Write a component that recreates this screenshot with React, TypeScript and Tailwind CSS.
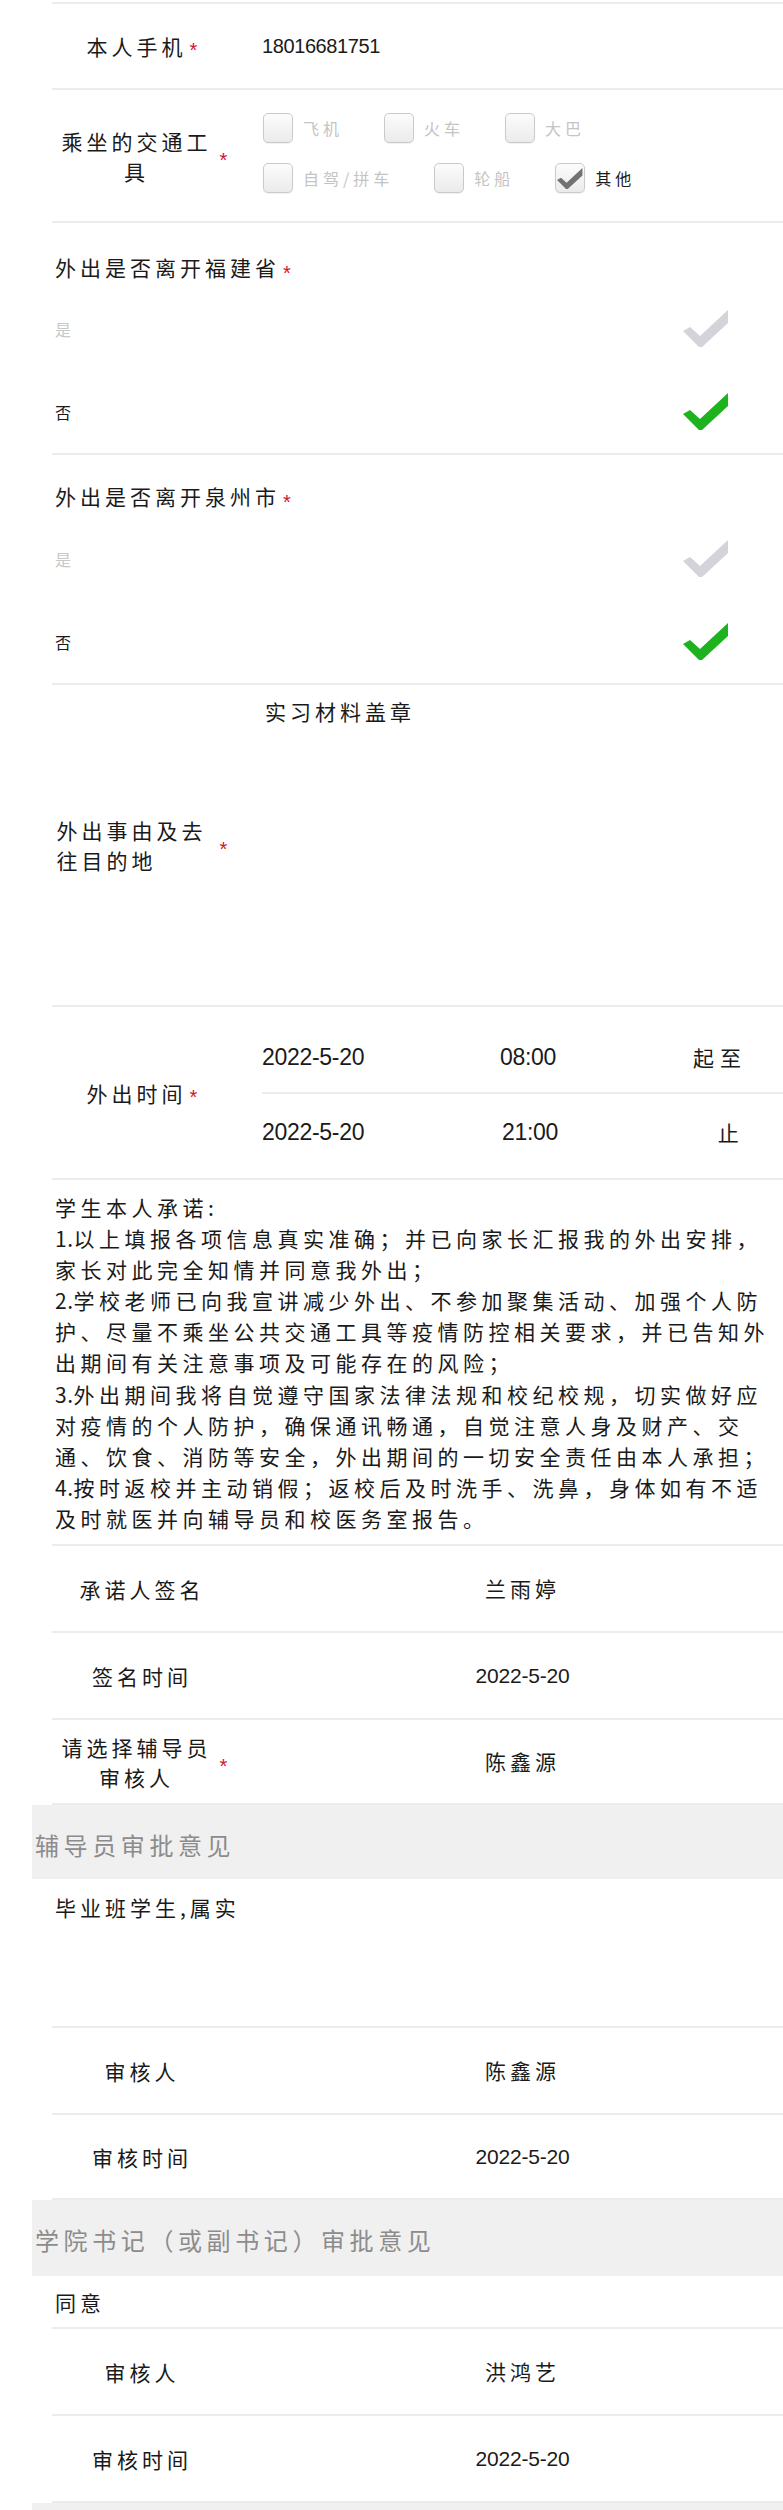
const rowLine = "border-b-2 border-[#ececec]";
const digits = "font-['Liberation_Sans','Noto_Sans_CJK_SC',sans-serif]";

function Star() {
  return (
    <span className="relative top-[4px] ml-[3px] font-['Liberation_Sans',sans-serif] text-[20px] leading-[20px] text-[#d0142c]">
      *
    </span>
  );
}

function Tick({ color, className = "" }: { color: string; className?: string }) {
  return (
    <svg className={className} width="46" height="37" viewBox="0 0 46 37">
      <polygon points="0,21 7,17 17,26 45,0 45,13 19,37 16,37" fill={color} />
    </svg>
  );
}

function Label({ text, required, left }: { text: string; required?: boolean; left?: boolean }) {
  return (
    <div className="flex w-[180px] shrink-0 items-center justify-center">
      <span className={`max-w-[160px] text-[21px] leading-[30px] tracking-[4px] ${left ? "text-left" : "text-center"}`}>
        {text}
      </span>
      {required && <Star />}
    </div>
  );
}

function Box({ label, checked }: { label: string; checked?: boolean }) {
  return (
    <div className="flex items-center gap-[10px]">
      <div className="flex h-[30px] w-[30px] items-center justify-center rounded-[5px] border border-[#cacaca] bg-linear-to-b from-[#fcfcfc] to-[#ebebeb] shadow-[0_1px_1px_rgba(0,0,0,0.06)]">
        {checked && <Tick color="#727272" className="h-[21px] w-[26px]" />}
      </div>
      <span className={`text-[16px] leading-[22px] tracking-[4px] ${checked ? "text-[#1a1a1a]" : "text-[#c4c4c4]"}`}>
        {label}
      </span>
    </div>
  );
}

function YesNo({ title, titleH, titlePt }: { title: string; titleH: string; titlePt: string }) {
  return (
    <div className={rowLine}>
      <div className={`${titleH} ${titlePt} pl-[3px] text-[21px] leading-[22px] tracking-[4px]`}>
        {title}
        <Star />
      </div>
      <div className="flex h-[83px] items-center justify-between pl-[3px]">
        <span className="text-[16px] text-[#c8c8c8]">是</span>
        <Tick color="#d3d3d9" className="mr-[54px]" />
      </div>
      <div className="flex h-[83px] items-center justify-between pl-[3px]">
        <span className="text-[16px] text-[#1a1a1a]">否</span>
        <Tick color="#1fb21f" className="mr-[54px]" />
      </div>
    </div>
  );
}

function InfoRow({ label, value, h, date, required }: { label: string; value: string; h: string; date?: boolean; required?: boolean }) {
  return (
    <div className={`flex ${h} items-center ${rowLine}`}>
      <Label text={label} required={required} />
      <div
        className={`ml-[30px] flex-1 text-center ${
          date ? `${digits} text-[21px] tracking-[-0.2px]` : "text-[21px] tracking-[4px]"
        }`}
      >
        {value}
      </div>
    </div>
  );
}

function Band({ title }: { title: string }) {
  return (
    <div className="h-[74px] bg-[#f0f0f0] pl-[3px] pt-[28px] text-[24px] leading-[24px] tracking-[4.6px] text-[#8c8c8c]">
      {title}
    </div>
  );
}

const promise = [
  ["", "学生本人承诺:"],
  ["1.", "以上填报各项信息真实准确；并已向家长汇报我的外出安排，"],
  ["", "家长对此完全知情并同意我外出；"],
  ["2.", "学校老师已向我宣讲减少外出、不参加聚集活动、加强个人防"],
  ["", "护、尽量不乘坐公共交通工具等疫情防控相关要求，并已告知外"],
  ["", "出期间有关注意事项及可能存在的风险；"],
  ["3.", "外出期间我将自觉遵守国家法律法规和校纪校规，切实做好应"],
  ["", "对疫情的个人防护，确保通讯畅通，自觉注意人身及财产、交"],
  ["", "通、饮食、消防等安全，外出期间的一切安全责任由本人承担；"],
  ["4.", "按时返校并主动销假；返校后及时洗手、洗鼻，身体如有不适"],
  ["", "及时就医并向辅导员和校医务室报告。"],
];

export default function App() {
  return (
    <div className="min-h-[2510px] overflow-x-hidden bg-white pl-[32px] pt-[2px] font-['Noto_Sans_CJK_SC',sans-serif] text-[#1a1a1a]">
      <div className="ml-[20px] border-t-2 border-[#ececec]">
        {/* phone */}
        <div className={`flex h-[86px] items-center ${rowLine}`}>
          <Label text="本人手机" required />
          <div className={`ml-[30px] ${digits} text-[20px] tracking-[-0.4px]`}>18016681751</div>
        </div>

        {/* transport */}
        <div className={`flex h-[133px] items-center ${rowLine}`}>
          <Label text="乘坐的交通工具" required />
          <div className="ml-[31px] flex h-full w-[420px] flex-wrap content-start gap-x-[41px] gap-y-[20px] pt-[23px]">
            <Box label="飞机" />
            <Box label="火车" />
            <Box label="大巴" />
            <Box label="自驾/拼车" />
            <Box label="轮船" />
            <Box label="其他" checked />
          </div>
        </div>

        <YesNo title="外出是否离开福建省" titleH="h-[64px]" titlePt="pt-[33px]" />
        <YesNo title="外出是否离开泉州市" titleH="h-[62px]" titlePt="pt-[30px]" />

        {/* reason */}
        <div className={`flex h-[322px] ${rowLine}`}>
          <div className="flex items-center">
            <Label text="外出事由及去往目的地" required left />
          </div>
          <div className="ml-[33px] pt-[15px] text-[21px] leading-[22px] tracking-[4px]">实习材料盖章</div>
        </div>

        {/* time */}
        <div className={`flex h-[173px] items-center ${rowLine}`}>
          <Label text="外出时间" required />
          <div className="ml-[30px] flex-1 self-stretch">
            <div className={`flex h-[87px] items-start pt-[38px] ${rowLine} ${digits} text-[23px] leading-[24px] tracking-[-0.3px]`}>
              <span className="w-[238px]">2022-5-20</span>
              <span className="w-[170px]">08:00</span>
              <span className="w-[100px] text-center font-['Noto_Sans_CJK_SC',sans-serif] text-[21px] tracking-[6px]">起至</span>
            </div>
            <div className={`flex h-[84px] items-start pt-[26px] ${digits} text-[23px] leading-[24px] tracking-[-0.3px]`}>
              <span className="w-[240px]">2022-5-20</span>
              <span className="w-[176px]">21:00</span>
              <span className="w-[100px] text-center font-['Noto_Sans_CJK_SC',sans-serif] text-[21px]">止</span>
            </div>
          </div>
        </div>

        {/* promise */}
        <div className={`h-[366px] pl-[3px] pt-[12px] ${rowLine}`}>
          {promise.map(([num, text], i) => (
            <div key={i} className="whitespace-nowrap text-[21px] leading-[31.1px] tracking-[4.5px]">
              {num && <span className="tracking-[0.5px]">{num}</span>}
              {text}
            </div>
          ))}
        </div>

        <InfoRow label="承诺人签名" value="兰雨婷" h="h-[87px]" />
        <InfoRow label="签名时间" value="2022-5-20" h="h-[87px]" date />
        <InfoRow label="请选择辅导员审核人" value="陈鑫源" h="h-[85px]" required />
      </div>

      <Band title="辅导员审批意见" />

      <div className="ml-[20px]">
        <div className={`h-[149px] pl-[3px] pt-[17px] text-[21px] leading-[22px] tracking-[4px] ${rowLine}`}>
          毕业班学生,属实
        </div>
        <InfoRow label="审核人" value="陈鑫源" h="h-[87px]" />
        <InfoRow label="审核时间" value="2022-5-20" h="h-[85px]" date />
      </div>

      <div className="h-[76px] bg-[#f0f0f0] pl-[3px] pt-[28px] text-[24px] leading-[24px] tracking-[4.6px] text-[#8c8c8c]">
        学院书记（或副书记）审批意见
      </div>

      <div className="ml-[20px]">
        <div className={`h-[53px] pl-[3px] pt-[15px] text-[21px] leading-[22px] tracking-[4px] ${rowLine}`}>同意</div>
        <InfoRow label="审核人" value="洪鸿艺" h="h-[87px]" />
        <InfoRow label="审核时间" value="2022-5-20" h="h-[87px]" date />
      </div>

      <Band title="" />
    </div>
  );
}
